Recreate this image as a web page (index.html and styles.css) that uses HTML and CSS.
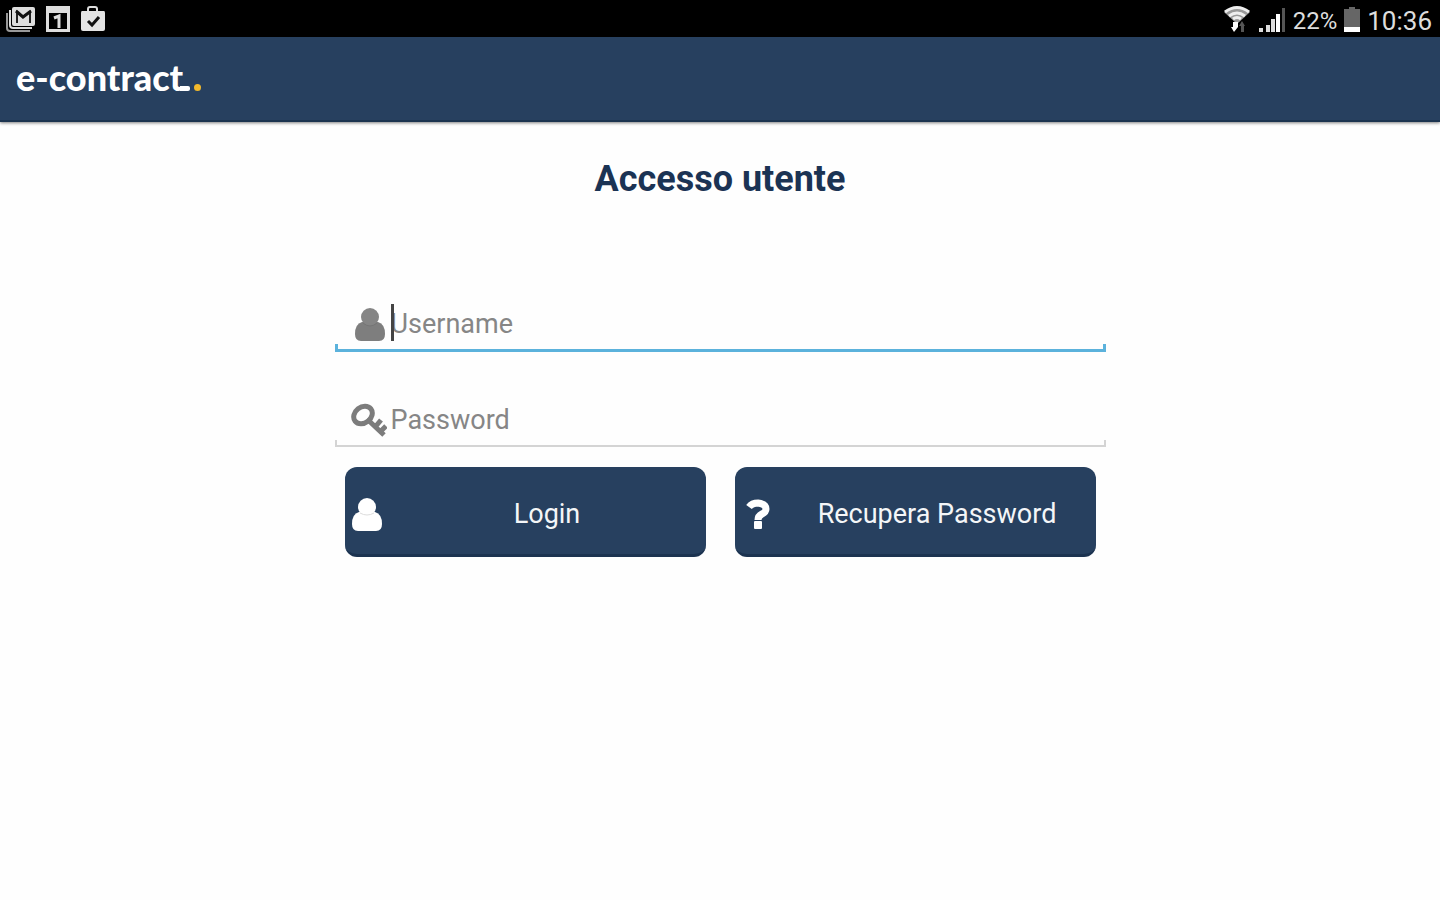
FILE: index.html
```html
<!DOCTYPE html>
<html lang="it">
<head>
    <meta charset="UTF-8">
    <meta name="viewport" content="width=device-width, initial-scale=1.0">
    <title>e-contract</title>
    <link rel="stylesheet" href="styles.css">
</head>
<body>
    <div class="status-bar">
        <div class="status-group">
            <svg class="status-icon" width="30" height="28" viewBox="0 0 30 28" aria-hidden="true">
                <path d="M1 8v15q0 3 3 3h20" fill="none" stroke="#999" stroke-width="2"/>
                <path d="M4 5v15q0 3 3 3h19" fill="none" stroke="#ddd" stroke-width="2"/>
                <rect x="6" y="2" width="23" height="19" rx="2" fill="#ddd"/>
                <path d="M11 18V7l6 5 7-5v11" fill="none" stroke="#222" stroke-width="2"/>
                <path d="M10 6l7 6 8-6" fill="none" stroke="#111" stroke-width="3"/>
            </svg>
            <svg class="status-icon" width="24" height="28" viewBox="0 0 24 28" aria-hidden="true">
                <path d="M0 1h24v26H0zM3 8v16h18V8z" fill="#ddd" fill-rule="evenodd"/>
                <path d="M8 13l5-2v12" fill="none" stroke="#ddd" stroke-width="3"/>
            </svg>
            <svg class="status-icon" width="26" height="28" viewBox="0 0 26 28" aria-hidden="true">
                <path d="M8 8V4q0-2 2-2h5q2 0 2 2v4" fill="none" stroke="#ddd" stroke-width="2"/>
                <path d="M2 6h22q1 0 1 2v16q0 2-2 2H3q-2 0-2-2V8q0-2 1-2z" fill="#e4e4e4"/>
                <path d="M8 16l4 4 7-8" fill="none" stroke="#111" stroke-width="3"/>
            </svg>
        </div>
        <div class="status-group status-right">
            <svg class="status-icon" width="28" height="28" viewBox="0 0 28 28" aria-hidden="true">
                <path d="M1 7Q14-3 27 7L14 19z" fill="#999"/>
                <path d="M2 7Q14-2 26 7M6 11q8-6 16 0M10 14q4-3 8 0" fill="none" stroke="#eee" stroke-width="3"/>
                <path d="M10 17v5H8l3 5 4-5v-5z" fill="#fff"/>
                <path d="M18 27v-6h-2l3-5 3 5h-1v6z" fill="#555"/>
            </svg>
            <svg class="status-icon" width="28" height="28" viewBox="0 0 28 28" aria-hidden="true">
                <path d="M1 23h4v4H1zM8 20h4v7H8zM13 14h4v13h-4z" fill="#ddd"/>
                <path d="M18 9h4v18h-4z" fill="#fff"/>
                <path d="M24 3h3v24h-3z" fill="#555"/>
            </svg>
            <span class="battery-level">22%</span>
            <svg class="status-icon" width="16" height="28" viewBox="0 0 16 28" aria-hidden="true">
                <path d="M0 4h5V2h6v2h5v18H0z" fill="#666"/>
                <path d="M0 22h16v5H0z" fill="#fff"/>
            </svg>
            <span class="clock">10:36</span>
        </div>
    </div>

    <header class="app-bar">
        <div class="logo">e-contract<span class="logo-tail"></span><span class="logo-dot"></span></div>
    </header>

    <main class="content">
        <h1 class="title">Accesso utente</h1>

        <form class="login-form">
            <div class="field field-active">
                <label for="username" aria-label="Username">
                    <svg class="field-icon" width="36" height="36" viewBox="0 0 36 36" aria-hidden="true">
                        <path d="M11 16h16q7 2 7 12 0 7-6 7H10q-6 0-6-7Q4 18 11 16z" fill="#7e7e7e"/>
                        <circle cx="19" cy="11" r="9" fill="#858585"/>
                        <path d="M12 17q7 6 14 0" fill="none" stroke="#757575" stroke-width="1"/>
                    </svg>
                </label>
                <div class="input-wrap">
                    <input class="field-input" type="text" id="username" placeholder="Username">
                    <span class="caret"></span>
                </div>
            </div>
            <div class="field">
                <label for="password" aria-label="Password">
                    <svg class="field-icon" width="36" height="36" viewBox="0 0 36 36" aria-hidden="true">
                        <ellipse cx="12" cy="13" rx="10" ry="8" transform="rotate(-38 12 13)" fill="none" stroke="#7c7c7c" stroke-width="5"/>
                        <path d="M16 17l17 16M25 24l5-6M30 29l5-5" fill="none" stroke="#7c7c7c" stroke-width="5"/>
                    </svg>
                </label>
                <div class="input-wrap">
                    <input class="field-input" type="password" id="password" placeholder="Password">
                </div>
            </div>
            <div class="buttons">
                <button class="btn" type="submit">
                    <svg class="btn-icon" width="32" height="36" viewBox="0 0 32 36" aria-hidden="true">
                        <path d="M8 16h16q7 2 7 12 0 7-6 7H7q-6 0-6-7Q1 18 8 16z" fill="#fff"/>
                        <circle cx="16" cy="11" r="9" fill="#fff"/>
                        <path d="M9 17q7 4 14 0" fill="none" stroke="#ddd" stroke-width="1"/>
                    </svg>
                    <span class="btn-text">Login</span>
                </button>
                <button class="btn" type="button">
                    <svg class="btn-icon" width="32" height="36" viewBox="0 0 32 36" aria-hidden="true">
                        <path d="M8 11Q11 7 17 7q8 1 8 6 0 3-4 5-4 2-4 6" fill="none" stroke="#fff" stroke-width="7"/>
                        <rect x="13" y="25" width="8" height="8" rx="1" fill="#fff"/>
                    </svg>
                    <span class="btn-text">Recupera Password</span>
                </button>
            </div>
        </form>
    </main>
</body>
</html>
```
FILE: styles.css
```css
* {
    box-sizing: border-box;
}
body {
    margin: 0;
    font-family: Roboto, "Liberation Sans", sans-serif;
    background-color: #fefefe;
}
.status-bar {
    display: flex;
    justify-content: space-between;
    align-items: center;
    height: 37px;
    padding: 0 8px 0 6px;
    background-color: #000;
    color: #ddd;
}
.status-group {
    display: flex;
    align-items: center;
    gap: 10px;
}
.status-right {
    gap: 7px;
}
.status-icon {
    display: block;
}
.battery-level {
    font-size: 24px;
    line-height: 36px;
    padding-top: 4px;
}
.clock {
    font-size: 26px;
    line-height: 36px;
    padding-top: 4px;
}
.app-bar {
    height: 85px;
    padding: 18px 16px;
    background-color: #27405f;
    border-bottom: 2px solid #1c3450;
    box-shadow: 0 1px 3px rgba(0, 0, 0, 0.5);
}
.logo {
    font-family: Lato, sans-serif;
    font-weight: 900;
    font-size: 36px;
    line-height: 44px;
    color: #fff;
}
.logo-tail {
    display: inline-block;
    width: 10px;
    height: 5px;
    margin-left: -3px;
    border-radius: 0 2px 2px 0;
    background-color: #fff;
}
.logo-dot {
    display: inline-block;
    width: 7px;
    height: 7px;
    margin-left: 4px;
    border-radius: 50%;
    background-color: #f2b92c;
}
.content {
    padding: 35px 16px;
}
.title {
    margin: 0;
    font-size: 36px;
    font-weight: 700;
    line-height: 44px;
    text-align: center;
    color: #1b3354;
}
.login-form {
    width: 56%;
    min-width: 640px;
    max-width: 771px;
    margin: 95px auto 0;
}
.field {
    display: flex;
    align-items: center;
    height: 56px;
    margin-bottom: 39px;
    padding: 3px 0 0 16px;
    border-bottom: 2px solid #d4d4d4;
    /* short ticks at both ends of the underline */
    background: linear-gradient(#d4d4d4, #d4d4d4) left bottom / 2px 5px no-repeat,
                linear-gradient(#d4d4d4, #d4d4d4) right bottom / 2px 5px no-repeat;
}
.field-active {
    border-bottom: 3px solid #5bb2dc;
    background: linear-gradient(#5bb2dc, #5bb2dc) left bottom / 3px 5px no-repeat,
                linear-gradient(#5bb2dc, #5bb2dc) right bottom / 3px 5px no-repeat;
}
.field-icon {
    display: block;
}
.input-wrap {
    position: relative;
    flex: 1;
    margin-left: 4px;
}
.field-input {
    display: block;
    width: 100%;
    height: 40px;
    padding: 0;
    border: none;
    outline: none;
    background: none;
    font-family: inherit;
    font-size: 27px;
    color: #333;
}
.field-input::placeholder {
    color: #868686;
    opacity: 1;
}
.caret {
    position: absolute;
    left: 0;
    top: 0;
    width: 3px;
    height: 37px;
    background-color: #444;
}
.buttons {
    display: flex;
    gap: 29px;
    margin-top: -19px;
    padding: 0 10px;
}
.btn {
    display: flex;
    flex: 1;
    align-items: center;
    gap: 12px;
    height: 90px;
    padding: 6px 6px 0;
    border: none;
    border-bottom: 3px solid #1c3350;
    border-radius: 12px;
    background-color: #27405f;
    color: #f4f6f8;
    font-family: inherit;
    font-size: 27px;
    cursor: pointer;
}
.btn-text {
    flex: 1;
    text-align: center;
}
```
